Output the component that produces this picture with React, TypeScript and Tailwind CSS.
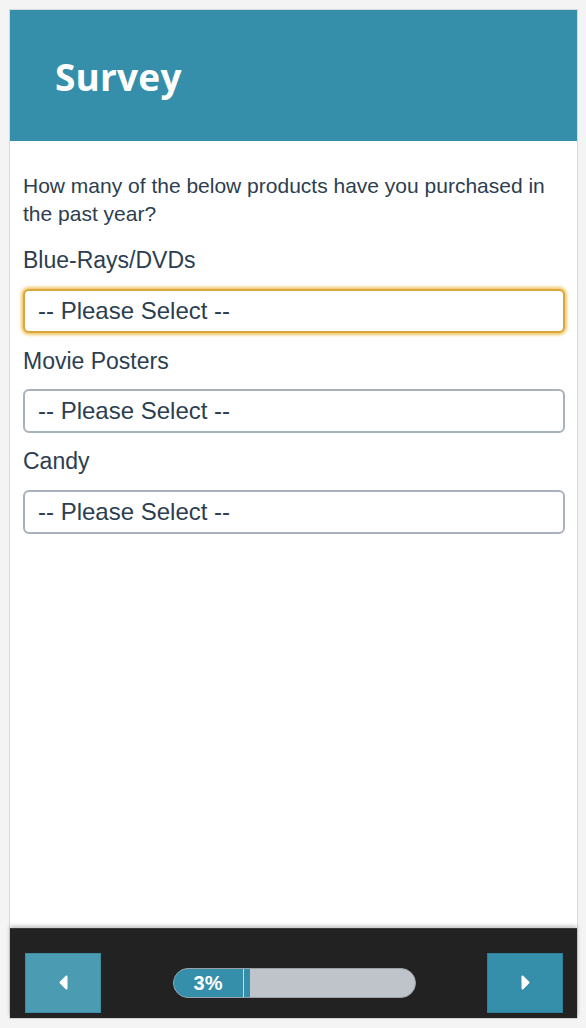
import React from 'react';

const questions = ['Blue-Rays/DVDs', 'Movie Posters', 'Candy'];

const SelectBox: React.FC<{ focused?: boolean }> = ({ focused }) => (
  <div
    className={`h-[44px] rounded-[6px] border-2 bg-white flex items-center pl-[13px] text-[24px] text-[#2c3e50] ${
      focused
        ? 'border-[#d9a640] shadow-[0_0_3px_2px_rgba(240,195,90,0.9)]'
        : 'border-[#a9b1ba]'
    }`}
  >
    -- Please Select --
  </div>
);

const Arrow: React.FC<{ dir: 'left' | 'right' }> = ({ dir }) => (
  <svg width="9" height="15" viewBox="0 0 9 15" className="block">
    <polygon
      points={dir === 'left' ? '7.5,1.5 7.5,13.5 1.5,7.5' : '1.5,1.5 1.5,13.5 7.5,7.5'}
      fill="#ffffff"
      stroke="#ffffff"
      strokeWidth="2"
      strokeLinejoin="round"
    />
  </svg>
);

export default function App() {
  const percent = 3;

  return (
    <div className="min-h-screen bg-[#f4f4f4] p-[9px]" style={{ fontFamily: '"Liberation Sans", Arial, sans-serif' }}>
      <div className="w-[569px] h-[1010px] border border-[#d9d9d9] bg-white flex flex-col">
        {/* Header */}
        <div className="h-[131px] bg-[#358fab] flex items-center pl-[45px] shrink-0">
          <h1
            className="text-[37px] font-bold text-white leading-none tracking-[0.2px] pt-[2px]"
            style={{ fontFamily: '"Open Sans", Lato, sans-serif' }}
          >
            Survey
          </h1>
        </div>

        {/* Body */}
        <div className="flex-1 flex flex-col pt-[31px] pl-[13px] pr-[12px]">
          <p className="text-[21px] leading-[28px] text-[#2c3e50] mb-[4px]">
            How many of the below products have you purchased in the past year?
          </p>
          {questions.map((q, i) => (
            <div key={q} className="flex flex-col">
              <div className="text-[23px] leading-[28px] text-[#2c3e50] mt-[14px] mb-[14.5px]">{q}</div>
              <SelectBox focused={i === 0} />
            </div>
          ))}
        </div>

        {/* Footer */}
        <div className="h-[90px] bg-[#222222] border-t border-[#3a3a3a] shadow-[0_-2px_4px_rgba(0,0,0,0.25)] flex items-center justify-between pl-[15px] pr-[14px] pt-[18px] shrink-0">
          <button className="w-[76px] h-[60px] bg-[#4b9bb3] border border-[#3f8ba2] flex items-center justify-center">
            <Arrow dir="left" />
          </button>

          <div className="w-[243px] h-[30px] rounded-full bg-[#bfc4cb] border border-[#9aa0a8] overflow-hidden flex">
            <div className="w-[69px] h-full bg-[#358fab] flex items-center justify-center text-white font-bold text-[20px]">
              {percent}%
            </div>
            <div className="w-[1px] h-full bg-[#c6dce3]" />
            <div className="w-[6px] h-full bg-[#358fab]" />
          </div>

          <button className="w-[76px] h-[60px] bg-[#358fab] border border-[#2e8099] flex items-center justify-center">
            <Arrow dir="right" />
          </button>
        </div>
      </div>
    </div>
  );
}
